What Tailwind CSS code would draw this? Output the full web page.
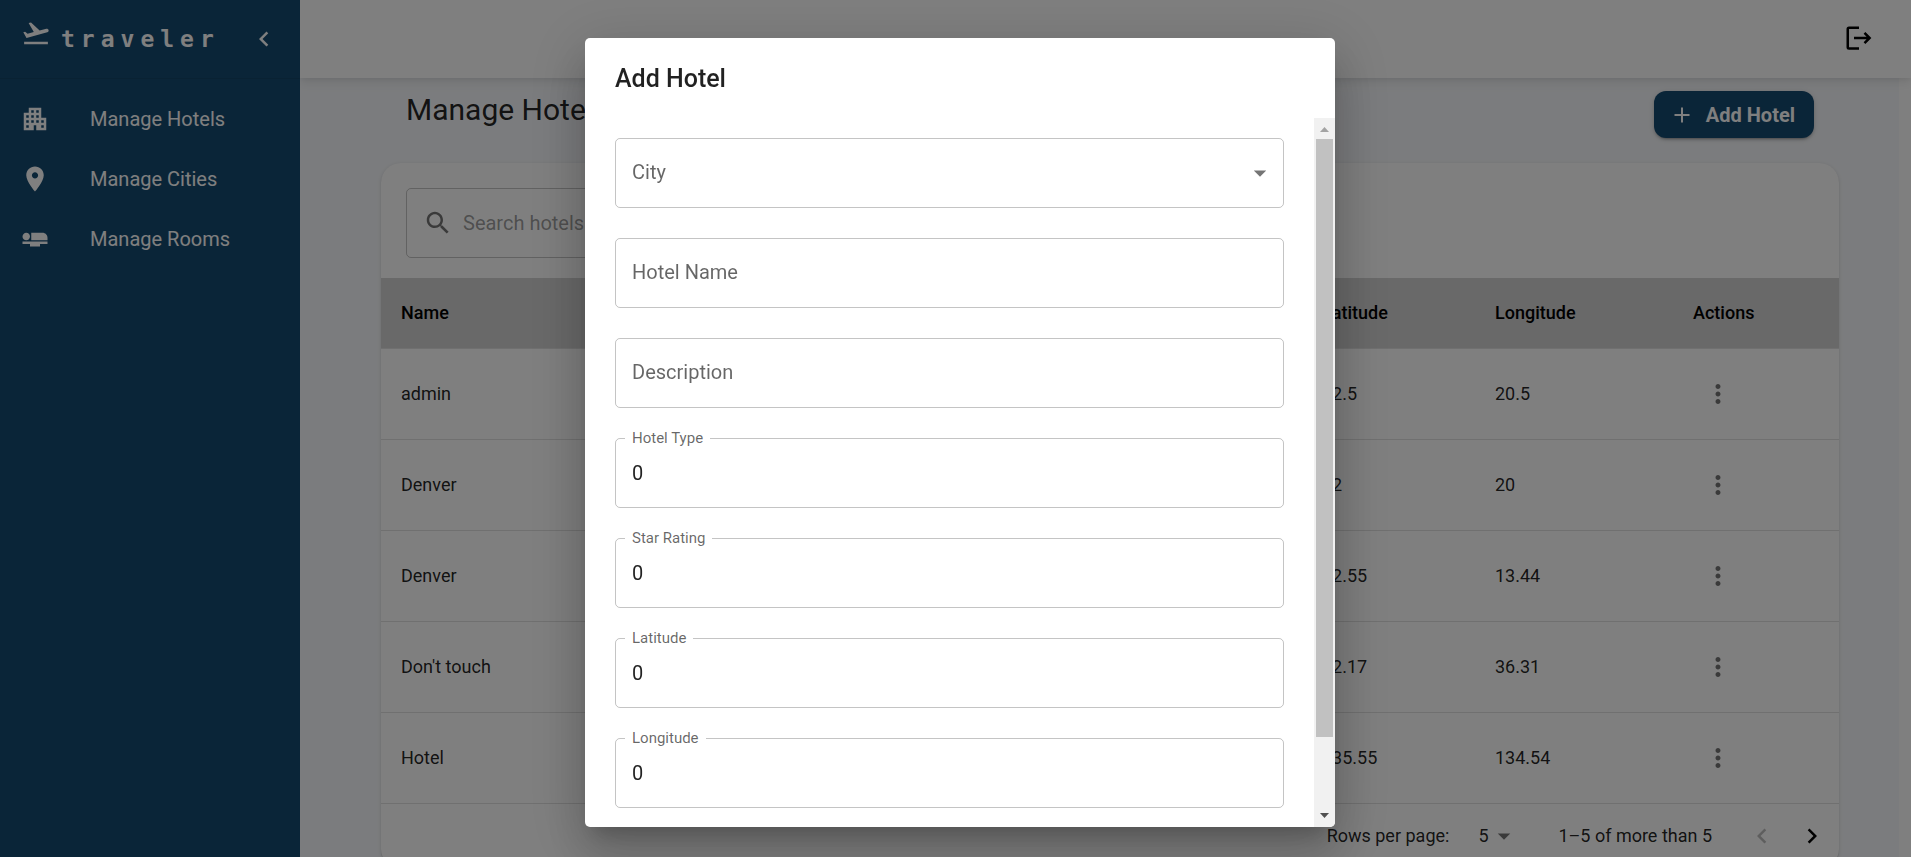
<!DOCTYPE html>
<html lang="en">
<head>
<meta charset="utf-8">
<meta name="viewport" content="width=device-width, initial-scale=1">
<title>traveler – Manage Hotels</title>
<script src="https://cdn.jsdelivr.net/npm/@tailwindcss/browser@4"></script>
</head>
<body class="h-screen overflow-hidden bg-white font-['Roboto',sans-serif] text-xl text-black/87">

<svg class="hidden" aria-hidden="true">
  <symbol id="dots" viewBox="0 0 24 24"><path d="M12 8c1.1 0 2-.9 2-2s-.9-2-2-2-2 .9-2 2 .9 2 2 2zm0 2c-1.1 0-2 .9-2 2s.9 2 2 2 2-.9 2-2-.9-2-2-2zm0 6c-1.1 0-2 .9-2 2s.9 2 2 2 2-.9 2-2-.9-2-2-2z"/></symbol>
</svg>

<div class="flex h-full">
  <!-- Sidebar -->
  <aside class="relative z-20 w-[300px] shrink-0 bg-[#154a70] text-white">
    <div class="flex h-[79px] items-center border-b border-black/8 pl-[21px] pr-[11px]">
      <svg class="mb-3 size-[30px] fill-current" viewBox="0 0 24 24"><path d="M2.5 19h19v2h-19v-2zm19.57-9.36c-.21-.8-1.04-1.28-1.84-1.06L14.92 10l-6.9-6.43-1.93.51 4.14 7.17-4.97 1.33-1.97-1.54-1.45.39 2.59 4.49L21 11.49c.81-.23 1.28-1.05 1.07-1.85z"/></svg>
      <span class="ml-[10px] font-['DejaVu_Sans_Mono',monospace] text-[23px] font-bold tracking-[6px]">traveler</span>
      <button type="button" aria-label="Collapse menu" class="ml-auto p-[10px]"><svg class="size-[30px] fill-current" viewBox="0 0 24 24"><path d="M15.41 7.41 14 6l-6 6 6 6 1.41-1.41L10.83 12z"/></svg></button>
    </div>
    <nav class="flex flex-col pt-[10px]">
      <a href="#hotels" class="flex h-[60px] items-center gap-[40px] px-5"><svg class="size-[30px] fill-current" viewBox="0 0 24 24"><path d="M17 11V3H7v4H3v14h8v-4h2v4h8V11h-4zM7 19H5v-2h2v2zm0-4H5v-2h2v2zm0-4H5V9h2v2zm4 4H9v-2h2v2zm0-4H9V9h2v2zm0-4H9V5h2v2zm4 8h-2v-2h2v2zm0-4h-2V9h2v2zm0-4h-2V5h2v2zm4 12h-2v-2h2v2zm0-4h-2v-2h2v2z"/></svg>Manage Hotels</a>
      <a href="#cities" class="flex h-[60px] items-center gap-[40px] px-5"><svg class="size-[30px] fill-current" viewBox="0 0 24 24"><path d="M12 2C8.13 2 5 5.13 5 9c0 5.25 7 13 7 13s7-7.75 7-13c0-3.87-3.13-7-7-7zm0 9.5c-1.38 0-2.5-1.12-2.5-2.5s1.12-2.5 2.5-2.5 2.5 1.12 2.5 2.5-1.12 2.5-2.5 2.5z"/></svg>Manage Cities</a>
      <a href="#rooms" class="flex h-[60px] items-center gap-[40px] px-5"><svg class="size-[30px] fill-current" viewBox="0 0 24 24"><path d="M22 11v2H9V7h9c2.21 0 4 1.79 4 4zM2 14v2h6v2h8v-2h6v-2H2zm5.14-1.9c1.16-1.19 1.14-3.08-.04-4.24-1.19-1.16-3.08-1.14-4.24.04-1.16 1.19-1.14 3.08.04 4.24 1.19 1.16 3.08 1.14 4.24-.04z"/></svg>Manage Rooms</a>
    </nav>
  </aside>

  <div class="flex min-w-0 grow flex-col">
    <header class="z-10 flex h-[78px] shrink-0 items-center justify-end bg-white pb-[2px] pr-[38px] text-black shadow-[0_2px_5px_-1px_rgba(0,0,0,0.06),0_5px_10px_0_rgba(0,0,0,0.08)]">
      <button type="button" aria-label="Log out"><svg class="size-[30px] stroke-current" viewBox="0 0 24 24" fill="none" stroke-width="2"><path d="M12.8 3.700H4.800Q3.800 3.700 3.800 4.700V19.300Q3.800 20.300 4.800 20.300H12.800M8.800 12H21M17.200 7.900 21.300 12 17.200 16.100"/></svg></button>
    </header>

    <main class="mr-3 grow bg-[#f7f9fc] pl-[81px] pr-[60px]">
      <div class="flex h-[85px] items-start justify-between px-[25px] pt-[13px]">
        <h1 class="text-3xl leading-[38px]">Manage Hotels</h1>
        <button type="button" class="flex h-[47px] items-center gap-[15px] rounded-xl bg-[#154a70] px-[19px] font-bold text-white shadow-[0_3px_2px_-2px_rgba(0,0,0,0.2),0_2px_3px_0_rgba(0,0,0,0.14),0_1px_6px_0_rgba(0,0,0,0.12)]"><svg class="size-[18px] stroke-current" viewBox="0 0 18 18" fill="none" stroke-width="2"><path d="M9 1.500v15M1.500 9h15"/></svg>Add Hotel</button>
      </div>

      <section class="overflow-hidden rounded-[20px] bg-white shadow-[0_2px_1px_-1px_rgba(0,0,0,0.2),0_1px_1px_0_rgba(0,0,0,0.14),0_1px_4px_0_rgba(0,0,0,0.12)]">
        <div class="px-[25px] pb-5 pt-[25px]">
          <label class="flex h-[70px] w-[400px] items-center gap-[10px] rounded-[5px] border border-black/23 px-[16px]">
            <svg class="size-[30px] fill-black/54" viewBox="0 0 24 24"><path d="M15.500 14h-.79l-.28-.27C15.410 12.590 16 11.110 16 9.500 16 5.910 13.090 3 9.500 3S3 5.910 3 9.500 5.910 16 9.500 16c1.610 0 3.090-.59 4.230-1.570l.27.28v.79l5 4.990L20.490 19l-4.990-5zm-6 0C7.010 14 5 11.990 5 9.500S7.010 5 9.500 5 14 7.010 14 9.500 11.990 14 9.500 14z"/></svg>
            <input type="search" aria-label="Search hotels" placeholder="Search hotels" class="min-w-0 grow outline-none placeholder:text-black/40">
          </label>
        </div>
        <table class="w-full table-fixed text-left text-lg">
          <colgroup><col><col class="w-[173px]"><col class="w-[198px]"><col class="w-[166px]"></colgroup>
          <thead class="bg-[#d3d3d3]">
            <tr class="h-[70px] border-b border-[#e0e0e0] text-black">
              <th class="px-5 font-medium">Name</th><th class="px-5 font-medium">Latitude</th><th class="px-5 font-medium">Longitude</th><th class="px-5 font-medium">Actions</th>
            </tr>
          </thead>
          <tbody>
            <tr class="h-[91px] border-b border-[#e0e0e0]"><td class="px-5">admin</td><td class="px-5">32.5</td><td class="px-5">20.5</td><td class="px-5"><button type="button" aria-label="Actions for admin" class="block p-[10px]"><svg class="size-[30px] fill-black/54"><use href="#dots"/></svg></button></td></tr>
            <tr class="h-[91px] border-b border-[#e0e0e0]"><td class="px-5">Denver</td><td class="px-5">32</td><td class="px-5">20</td><td class="px-5"><button type="button" aria-label="Actions for Denver" class="block p-[10px]"><svg class="size-[30px] fill-black/54"><use href="#dots"/></svg></button></td></tr>
            <tr class="h-[91px] border-b border-[#e0e0e0]"><td class="px-5">Denver</td><td class="px-5">52.55</td><td class="px-5">13.44</td><td class="px-5"><button type="button" aria-label="Actions for Denver" class="block p-[10px]"><svg class="size-[30px] fill-black/54"><use href="#dots"/></svg></button></td></tr>
            <tr class="h-[91px] border-b border-[#e0e0e0]"><td class="px-5">Don't touch</td><td class="px-5">32.17</td><td class="px-5">36.31</td><td class="px-5"><button type="button" aria-label="Actions for Don't touch" class="block p-[10px]"><svg class="size-[30px] fill-black/54"><use href="#dots"/></svg></button></td></tr>
            <tr class="h-[91px] border-b border-[#e0e0e0]"><td class="px-5">Hotel</td><td class="px-5">135.55</td><td class="px-5">134.54</td><td class="px-5"><button type="button" aria-label="Actions for Hotel" class="block p-[10px]"><svg class="size-[30px] fill-black/54"><use href="#dots"/></svg></button></td></tr>
          </tbody>
        </table>
        <div class="flex h-[65px] items-center justify-end pr-[2px] text-lg">
          <label for="rows">Rows per page:</label>
          <div class="ml-[19px] mr-[39px] flex items-center">
            <select id="rows" class="w-[21px] appearance-none pl-[10px] outline-none"><option>5</option></select>
            <svg class="size-[30px] fill-black/54" viewBox="0 0 24 24"><path d="m7 10 5 5 5-5z"/></svg>
          </div>
          <span>1–5 of more than 5</span>
          <button type="button" disabled aria-label="Previous page" class="ml-[25px] p-[10px]"><svg class="size-[30px] fill-black/26" viewBox="0 0 24 24"><path d="M15.410 16.590 10.830 12l4.580-4.590L14 6l-6 6 6 6 1.410-1.410z"/></svg></button>
          <button type="button" aria-label="Next page" class="p-[10px]"><svg class="size-[30px] fill-black" viewBox="0 0 24 24"><path d="M8.590 16.590 13.170 12 8.590 7.410 10 6l6 6-6 6-1.410-1.410z"/></svg></button>
        </div>
      </section>
    </main>
  </div>
</div>

<!-- Dialog -->
<div class="fixed inset-0 z-30 flex justify-center bg-black/50 pb-[30px] pl-[9px] pt-[38px]">
  <div role="dialog" aria-modal="true" aria-labelledby="dialog-title" class="flex w-[750px] flex-col overflow-hidden rounded-[5px] bg-white shadow-[0_14px_19px_-9px_rgba(0,0,0,0.2),0_30px_48px_4px_rgba(0,0,0,0.14),0_11px_58px_10px_rgba(0,0,0,0.12)]">
    <h2 id="dialog-title" class="flex h-20 shrink-0 items-center px-[30px] text-[25px] font-medium">Add Hotel</h2>
    <div class="flex min-h-0 grow">
      <form class="flex min-w-0 grow flex-col gap-[30px] overflow-hidden px-[30px] pt-5">
        <div class="relative h-[70px] shrink-0">
          <label for="city" class="sr-only">City</label>
          <select id="city" class="h-full w-full appearance-none rounded-[5px] border border-black/23 px-[16px] pb-[2px] text-black/60 outline-none"><option>City</option></select>
          <svg class="pointer-events-none absolute right-[9px] top-5 size-[30px] fill-black/54" viewBox="0 0 24 24"><path d="m7 10 5 5 5-5z"/></svg>
        </div>
        <input aria-label="Hotel Name" placeholder="Hotel Name" class="h-[70px] shrink-0 rounded-[5px] border border-black/23 px-[16px] pb-[2px] outline-none placeholder:text-black/60">
        <input aria-label="Description" placeholder="Description" class="h-[70px] shrink-0 rounded-[5px] border border-black/23 px-[16px] pb-[2px] outline-none placeholder:text-black/60">
        <div class="relative h-[70px] shrink-0"><input id="type" value="0" class="h-full w-full rounded-[5px] border border-black/23 px-[16px] outline-none"><label for="type" class="absolute -top-[10px] left-[10px] bg-white px-[7px] text-[15px] leading-5 text-black/60">Hotel Type</label></div>
        <div class="relative h-[70px] shrink-0"><input id="rating" value="0" class="h-full w-full rounded-[5px] border border-black/23 px-[16px] outline-none"><label for="rating" class="absolute -top-[10px] left-[10px] bg-white px-[7px] text-[15px] leading-5 text-black/60">Star Rating</label></div>
        <div class="relative h-[70px] shrink-0"><input id="lat" value="0" class="h-full w-full rounded-[5px] border border-black/23 px-[16px] outline-none"><label for="lat" class="absolute -top-[10px] left-[10px] bg-white px-[7px] text-[15px] leading-5 text-black/60">Latitude</label></div>
        <div class="relative h-[70px] shrink-0"><input id="lon" value="0" class="h-full w-full rounded-[5px] border border-black/23 px-[16px] outline-none"><label for="lon" class="absolute -top-[10px] left-[10px] bg-white px-[7px] text-[15px] leading-5 text-black/60">Longitude</label></div>
      </form>
      <!-- Scroll bar -->
      <div class="flex w-[21px] shrink-0 flex-col items-center bg-[#f1f1f1]" aria-hidden="true">
        <svg class="size-[21px] shrink-0 fill-[#a3a3a3]" viewBox="0 0 21 21"><path d="M6 14h9l-4.500-5z"/></svg>
        <div class="w-full grow px-[2px]"><div class="h-[598px] bg-[#c1c1c1]"></div></div>
        <svg class="size-[21px] shrink-0 fill-[#505050]" viewBox="0 0 21 21"><path d="M6 7h9l-4.500 5z"/></svg>
      </div>
    </div>
  </div>
</div>
</body>
</html>
